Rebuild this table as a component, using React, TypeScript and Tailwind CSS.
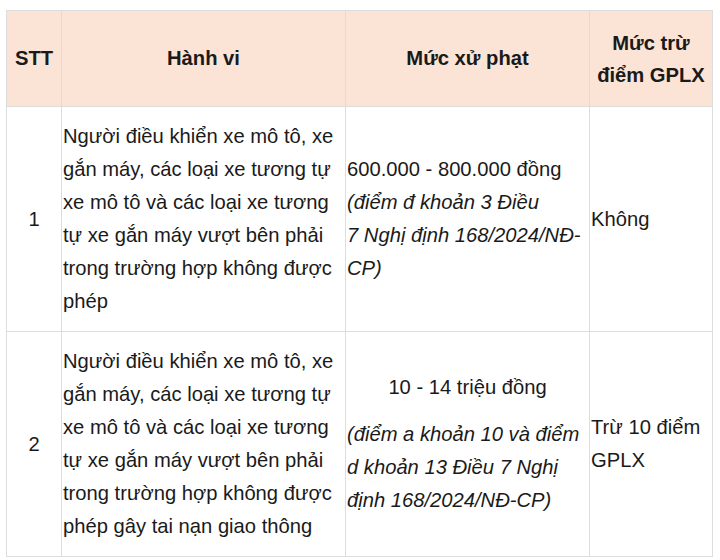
import React from "react";

const cell = "border border-[#dddddd] align-middle px-px";

export default function App() {
  return (
    <div className="w-[720px] h-[560px] bg-white pt-[10px] pl-[6px] font-['Liberation_Sans',Arial,sans-serif] text-[20.2px] text-[#1a1a1a] leading-[33px]">
      <table className="table-fixed border-collapse w-[706px]">
        <colgroup>
          <col className="w-[55px]" />
          <col className="w-[284px]" />
          <col className="w-[244px]" />
          <col className="w-[123px]" />
        </colgroup>
        <thead>
          <tr className="h-[96px] bg-[#fbe4d6]">
            <th className={`${cell} text-center font-bold`}>STT</th>
            <th className={`${cell} text-center font-bold`}>Hành vi</th>
            <th className={`${cell} text-center font-bold`}>Mức xử phạt</th>
            <th className={`${cell} text-center font-bold leading-[32px]`}>
              Mức trừ
              <br />
              điểm GPLX
            </th>
          </tr>
        </thead>
        <tbody>
          {/* Row 1 */}
          <tr className="h-[225px]">
            <td className={`${cell} text-center`}>1</td>
            <td className={cell}>
              Người điều khiển xe mô tô, xe gắn máy, các loại xe tương tự xe mô tô và các loại xe tương tự xe gắn máy vượt bên phải trong trường hợp không được phép
            </td>
            <td className={cell}>
              600.000 - 800.000 đồng <i>(điểm đ khoản 3 Điều 7{"\u00a0"}Nghị định 168/2024/NĐ-CP)</i>
            </td>
            <td className={cell}>Không</td>
          </tr>

          {/* Row 2 */}
          <tr className="h-[225px]">
            <td className={`${cell} text-center`}>2</td>
            <td className={cell}>
              Người điều khiển xe mô tô, xe gắn máy, các loại xe tương tự xe mô tô và các loại xe tương tự xe gắn máy vượt bên phải trong trường hợp không được phép gây tai nạn giao thông
            </td>
            <td className={cell}>
              <p className="text-center mb-[14px]">10 - 14 triệu đồng</p>
              <p>
                <i>(điểm a khoản 10 và điểm d khoản 13 Điều 7 Nghị định 168/2024/NĐ-CP)</i>
              </p>
            </td>
            <td className={cell}>Trừ 10 điểm GPLX</td>
          </tr>
        </tbody>
      </table>
    </div>
  );
}
